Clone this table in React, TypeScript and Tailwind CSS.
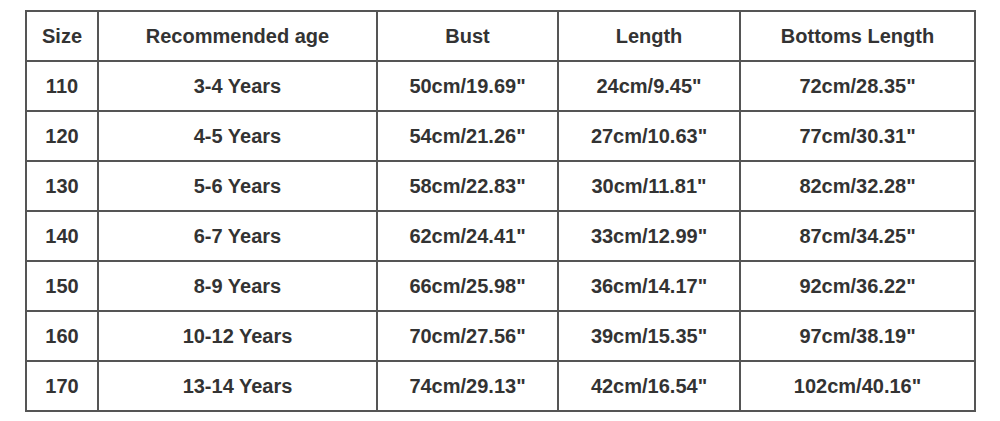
import React from "react";

const rows = [
  ["110", "3-4 Years", "50cm/19.69\"", "24cm/9.45\"", "72cm/28.35\""],
  ["120", "4-5 Years", "54cm/21.26\"", "27cm/10.63\"", "77cm/30.31\""],
  ["130", "5-6 Years", "58cm/22.83\"", "30cm/11.81\"", "82cm/32.28\""],
  ["140", "6-7 Years", "62cm/24.41\"", "33cm/12.99\"", "87cm/34.25\""],
  ["150", "8-9 Years", "66cm/25.98\"", "36cm/14.17\"", "92cm/36.22\""],
  ["160", "10-12 Years", "70cm/27.56\"", "39cm/15.35\"", "97cm/38.19\""],
  ["170", "13-14 Years", "74cm/29.13\"", "42cm/16.54\"", "102cm/40.16\""],
];

const headers = ["Size", "Recommended age", "Bust", "Length", "Bottoms Length"];

export default function App() {
  return (
    <div className="w-[1000px] h-[421px] bg-white pt-[10px] pl-[25px]" style={{ fontFamily: '"Liberation Sans", Arial, sans-serif' }}>
      <table className="border-collapse table-fixed w-[949px] text-[20px] font-bold text-[#333]">
        <colgroup>
          <col className="w-[72px]" />
          <col className="w-[279px]" />
          <col className="w-[181px]" />
          <col className="w-[182px]" />
          <col className="w-[235px]" />
        </colgroup>
        <tbody>
          <tr className="h-[50px]">
            {headers.map((h) => (
              <td key={h} className="border-2 border-[#555] text-center align-middle p-0 leading-none">
                {h}
              </td>
            ))}
          </tr>
          {rows.map((r) => (
            <tr key={r[0]} className="h-[50px]">
              {r.map((c, i) => (
                <td key={i} className="border-2 border-[#555] text-center align-middle p-0 leading-none">
                  {c}
                </td>
              ))}
            </tr>
          ))}
        </tbody>
      </table>
    </div>
  );
}
